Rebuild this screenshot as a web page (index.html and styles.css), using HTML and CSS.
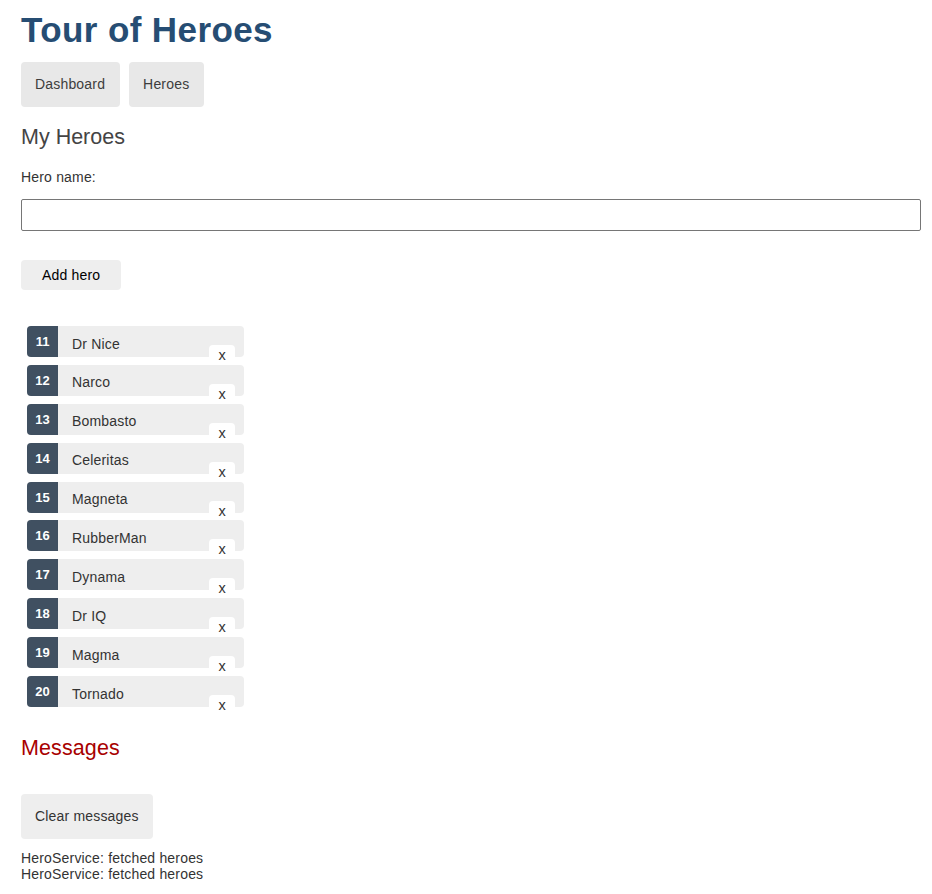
FILE: index.html
```html
<!DOCTYPE html>
<html lang="en">
<head>
<meta charset="utf-8">
<title>Tour of Heroes</title>
<link rel="stylesheet" href="styles.css">
</head>
<body>
<div class="app">
  <h1 class="title">Tour of Heroes</h1>
  <nav class="nav">
    <a class="nav-link" href="#">Dashboard</a>
    <a class="nav-link" href="#">Heroes</a>
  </nav>
  <h2 class="section-title">My Heroes</h2>
  <label class="field-label" for="new-hero">Hero name: </label>
  <input class="field-input" id="new-hero" type="text">
  <button class="add-button" type="button">Add hero</button>
  <ul class="heroes">
    <li class="hero"><a class="hero-link" href="#"><span class="badge">11</span><span class="hero-name">Dr Nice</span></a><button class="delete" type="button">x</button></li>
    <li class="hero"><a class="hero-link" href="#"><span class="badge">12</span><span class="hero-name">Narco</span></a><button class="delete" type="button">x</button></li>
    <li class="hero"><a class="hero-link" href="#"><span class="badge">13</span><span class="hero-name">Bombasto</span></a><button class="delete" type="button">x</button></li>
    <li class="hero"><a class="hero-link" href="#"><span class="badge">14</span><span class="hero-name">Celeritas</span></a><button class="delete" type="button">x</button></li>
    <li class="hero"><a class="hero-link" href="#"><span class="badge">15</span><span class="hero-name">Magneta</span></a><button class="delete" type="button">x</button></li>
    <li class="hero"><a class="hero-link" href="#"><span class="badge">16</span><span class="hero-name">RubberMan</span></a><button class="delete" type="button">x</button></li>
    <li class="hero"><a class="hero-link" href="#"><span class="badge">17</span><span class="hero-name">Dynama</span></a><button class="delete" type="button">x</button></li>
    <li class="hero"><a class="hero-link" href="#"><span class="badge">18</span><span class="hero-name">Dr IQ</span></a><button class="delete" type="button">x</button></li>
    <li class="hero"><a class="hero-link" href="#"><span class="badge">19</span><span class="hero-name">Magma</span></a><button class="delete" type="button">x</button></li>
    <li class="hero"><a class="hero-link" href="#"><span class="badge">20</span><span class="hero-name">Tornado</span></a><button class="delete" type="button">x</button></li>
  </ul>
  <h2 class="messages-title">Messages</h2>
  <button class="clear" type="button">Clear messages</button>
  <div class="messages">
    <div class="message">HeroService: fetched heroes</div>
    <div class="message">HeroService: fetched heroes</div>
  </div>
</div>
</body>
</html>
```
FILE: styles.css
```css
html, body {
  margin: 0;
  padding: 0;
  background: #fff;
}

body {
  font-family: "Liberation Sans", Arial, Helvetica, sans-serif;
  font-size: 14px;
  line-height: 16px;
  letter-spacing: 0.18px;
  color: #333;
}

.app {
  display: flex;
  flex-direction: column;
  align-items: flex-start;
  padding: 10px 11px 20px 21px;
}

.title {
  margin: 0;
  font-size: 35px;
  line-height: 40px;
  font-weight: bold;
  letter-spacing: 0.4px;
  color: #264d73;
}

.nav {
  display: flex;
  gap: 9px;
  margin-top: 12px;
}

.nav-link {
  display: block;
  padding: 14px 15px 14px 14px;
  line-height: 17px;
  background-color: #e8e8e8;
  color: #3d3d3d;
  text-decoration: none;
  border-radius: 4px;
}

.section-title,
.messages-title {
  margin: 18px 0 0 0;
  font-size: 21.5px;
  line-height: 25px;
  font-weight: normal;
  letter-spacing: 0;
  color: #444;
}

.field-label {
  display: block;
  margin-top: 19px;
}

.field-input {
  display: block;
  align-self: stretch;
  box-sizing: border-box;
  height: 32px;
  margin: 14px 0 0 0;
  padding: 0 8px;
  border: 1px solid #767676;
  border-radius: 2px;
  font: inherit;
  background: #fff;
}

.add-button {
  margin-top: 29px;
  padding: 7px 21px 7px 21px;
  font: inherit;
  line-height: 16px;
  letter-spacing: 0.18px;
  color: #000;
  background-color: #eee;
  border: none;
  border-radius: 4px;
}

.heroes {
  list-style: none;
  margin: 36px 0 0 6px;
  padding: 0;
  display: flex;
  flex-direction: column;
  gap: 7.9px;
}

.hero {
  position: relative;
  width: 217px;
  height: 31px;
}

.hero-link {
  display: flex;
  align-items: flex-start;
  height: 31px;
  background-color: #eee;
  border-radius: 4px;
  color: #333;
  text-decoration: none;
}

.badge {
  display: flex;
  align-items: center;
  justify-content: center;
  width: 31px;
  height: 31px;
  background-color: #405061;
  color: #fff;
  font-size: 13px;
  font-weight: bold;
  line-height: 13px;
  letter-spacing: 0;
  border-radius: 4px 0 0 4px;
}

.hero-name {
  margin-left: 14px;
  padding-top: 9.5px;
}

.delete {
  position: absolute;
  left: 182px;
  top: 19px;
  width: 26px;
  padding: 2px 0 4px 0;
  font: inherit;
  font-size: 14.5px;
  line-height: 16px;
  text-align: center;
  color: #333;
  background-color: #fff;
  border: none;
  border-radius: 4px;
}

.messages-title {
  margin-top: 28.5px;
  letter-spacing: 0.1px;
  color: #a80000;
}

.clear {
  margin-top: 33.5px;
  padding: 14px 14px 14px 14px;
  font: inherit;
  line-height: 17px;
  letter-spacing: 0.18px;
  color: #333;
  background-color: #eee;
  border: none;
  border-radius: 4px;
}

.messages {
  margin-top: 11px;
}

.message {
  line-height: 16px;
}
```
